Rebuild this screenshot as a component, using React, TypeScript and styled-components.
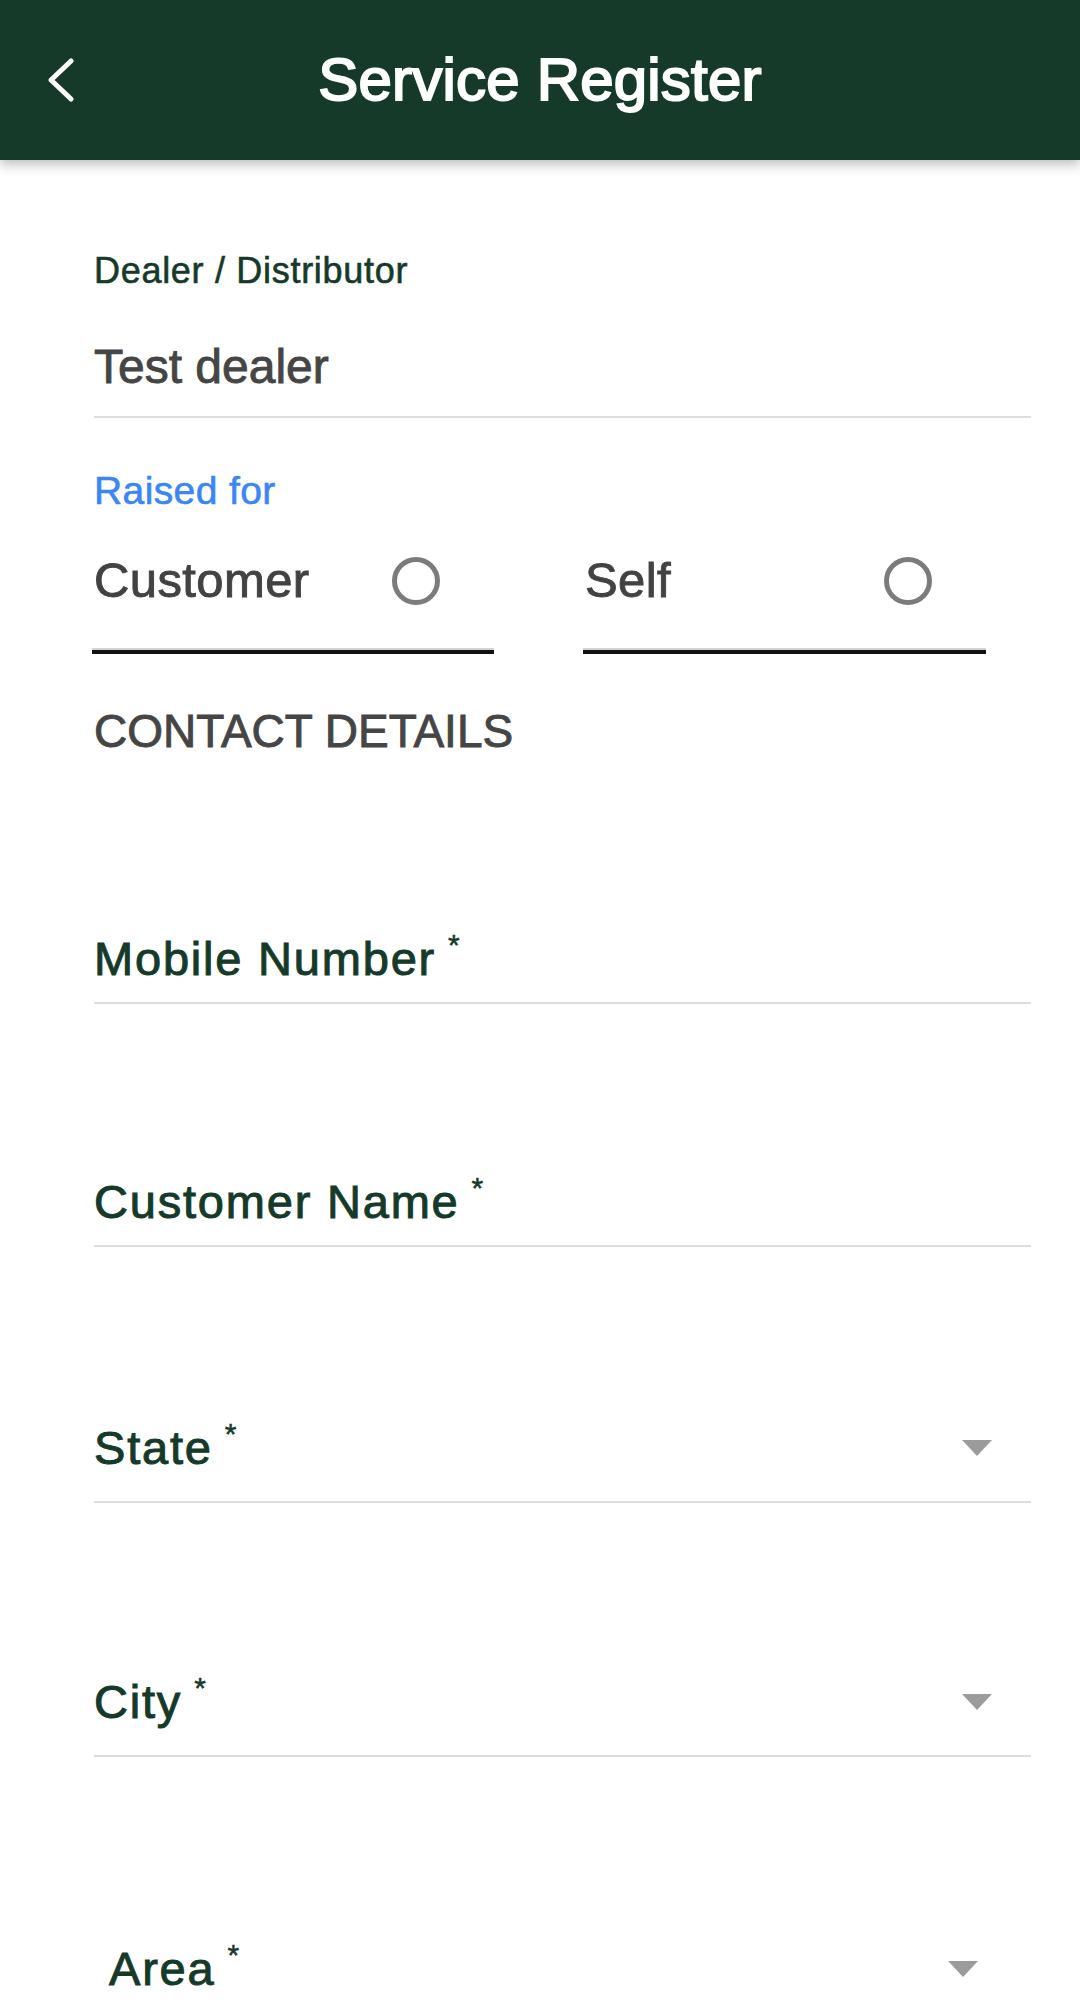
import React from "react";
import styled, { createGlobalStyle } from "styled-components";

const GlobalStyle = createGlobalStyle`
  html, body {
    margin: 0;
    padding: 0;
    background: #ffffff;
  }
  body {
    font-family: "Liberation Sans", Arial, Helvetica, sans-serif;
  }
  #root {
    width: 1080px;
    height: 2006px;
    overflow: hidden;
  }
`;

const GREEN = "#163a2a";

const Screen = styled.div`
  width: 1080px;
  height: 2006px;
  overflow: hidden;
  background: #ffffff;
  display: flex;
  flex-direction: column;
`;

const Header = styled.header`
  flex: none;
  height: 160px;
  background: ${GREEN};
  display: grid;
  grid-template-columns: 1fr auto 1fr;
  align-items: center;
  padding: 0 47px;
  box-shadow: 0 4px 12px rgba(0, 0, 0, 0.28);
  position: relative;
  z-index: 1;
`;

const BackButton = styled.button`
  justify-self: start;
  background: none;
  border: none;
  padding: 0;
  margin: 0;
  display: flex;
  align-items: center;
  cursor: pointer;
`;

const Title = styled.h1`
  margin: 0;
  font-size: 60px;
  line-height: 1;
  font-weight: 400;
  letter-spacing: 0.2px;
  -webkit-text-stroke-width: 2px;
  color: #ffffff;
  white-space: nowrap;
`;

const Form = styled.main`
  flex: 1;
  display: flex;
  flex-direction: column;
  padding: 93px 49px 0 94px;
`;

const SmallLabel = styled.div`
  font-size: 36px;
  line-height: 1;
  letter-spacing: 0.7px;
  -webkit-text-stroke-width: 0.6px;
  color: ${GREEN};
`;

const ValueField = styled.div`
  margin-top: 54px;
  font-size: 48px;
  line-height: 1;
  -webkit-text-stroke-width: 0.9px;
  color: #454545;
  padding-bottom: 25px;
  border-bottom: 2.5px solid #dddddd;
`;

const RaisedLabel = styled.div`
  margin-top: 53px;
  font-size: 39px;
  line-height: 1;
  letter-spacing: 0.4px;
  -webkit-text-stroke-width: 0.6px;
  color: #3a86f5;
`;

const RadioGroup = styled.div`
  margin-top: 46px;
  margin-left: -2px;
  display: grid;
  grid-template-columns: 402px 403px;
  column-gap: 89px;
`;

const RadioOption = styled.label`
  display: flex;
  align-items: center;
  justify-content: space-between;
  padding: 0 54px 45px 2px;
  border-bottom: 4px solid #111111;
  box-shadow: inset 0 -2px 0 #d2d2d2;
  cursor: pointer;
`;

const RadioText = styled.span`
  font-size: 49px;
  line-height: 1;
  letter-spacing: 0.4px;
  -webkit-text-stroke-width: 0.9px;
  color: #424242;
`;

const RadioCircle = styled.span`
  width: 48px;
  height: 48px;
  box-sizing: border-box;
  border: 5px solid #7b7b7b;
  border-radius: 50%;
`;

const SectionTitle = styled.h2`
  margin: 54px 0 0;
  font-size: 46px;
  line-height: 1;
  font-weight: 400;
  -webkit-text-stroke-width: 0.9px;
  color: #454545;
`;

const Field = styled.div<{ $gap: number; $select?: boolean; $inset?: number }>`
  margin-top: ${(p) => p.$gap}px;
  display: flex;
  align-items: center;
  justify-content: space-between;
  padding: 0 0 ${(p) => (p.$select ? 30 : 20)}px ${(p) => p.$inset ?? 0}px;
  border-bottom: 2.5px solid #dddddd;
`;

const FieldLabel = styled.span`
  font-size: 47px;
  line-height: 1;
  letter-spacing: 1.8px;
  -webkit-text-stroke-width: 1px;
  color: ${GREEN};
  white-space: nowrap;
`;

const Required = styled.span`
  font-size: 30px;
  line-height: 0;
  letter-spacing: 0;
  -webkit-text-stroke-width: 0.5px;
  vertical-align: 20px;
  margin-left: 12px;
`;

const Caret = styled.span<{ $right: number }>`
  width: 0;
  height: 0;
  border-left: 15px solid transparent;
  border-right: 15px solid transparent;
  border-top: 16px solid #9b9b9b;
  margin-right: ${(p) => p.$right}px;
`;

type FieldDef = {
  label: string;
  gap: number;
  select?: boolean;
  inset?: number;
  caretRight?: number;
};

const fields: FieldDef[] = [
  { label: "Mobile Number", gap: 181 },
  { label: "Customer Name", gap: 174 },
  { label: "State", gap: 177, select: true, caretRight: 39 },
  { label: "City", gap: 175, select: true, caretRight: 39 },
  { label: "Area", gap: 188, select: true, inset: 15, caretRight: 53 },
];

const BackIcon = () => (
  <svg width="28" height="44" viewBox="0 0 28 44" fill="none">
    <polyline
      points="24,3 4,22 24,41"
      stroke="#ffffff"
      strokeWidth="5"
      strokeLinecap="round"
      strokeLinejoin="round"
    />
  </svg>
);

export default function App() {
  return (
    <>
      <GlobalStyle />
      <Screen>
        <Header>
          <BackButton aria-label="Back">
            <BackIcon />
          </BackButton>
          <Title>Service Register</Title>
          <span />
        </Header>
        <Form>
          <SmallLabel>Dealer / Distributor</SmallLabel>
          <ValueField>Test dealer</ValueField>
          <RaisedLabel>Raised for</RaisedLabel>
          <RadioGroup>
            <RadioOption>
              <RadioText>Customer</RadioText>
              <RadioCircle />
            </RadioOption>
            <RadioOption>
              <RadioText>Self</RadioText>
              <RadioCircle />
            </RadioOption>
          </RadioGroup>
          <SectionTitle>CONTACT DETAILS</SectionTitle>
          {fields.map((f) => (
            <Field key={f.label} $gap={f.gap} $select={f.select} $inset={f.inset}>
              <FieldLabel>
                {f.label}
                <Required>*</Required>
              </FieldLabel>
              {f.select && <Caret $right={f.caretRight ?? 39} />}
            </Field>
          ))}
        </Form>
      </Screen>
    </>
  );
}
